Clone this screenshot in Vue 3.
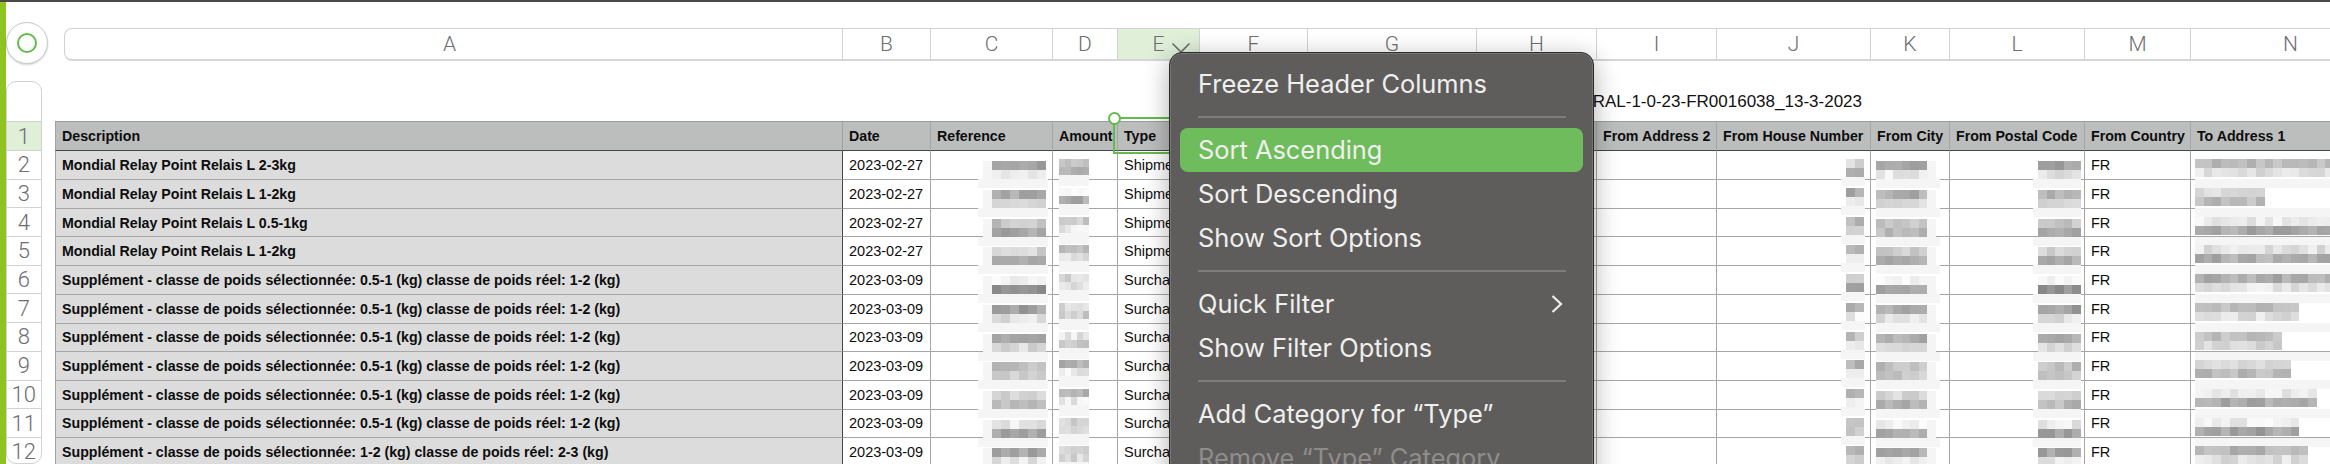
<script setup>
const widths = [788, 88, 122, 65, 82, 108, 169, 120, 120, 154, 79, 135, 106, 200]
const letters = 'ABCDEFGHIJKLMN'.split('')
const headers = ['Description', 'Date', 'Reference', 'Amount', 'Type', '', '', '', 'From Address 2', 'From House Number', 'From City', 'From Postal Code', 'From Country', 'To Address 1']
const barColumns = `778px ${widths.slice(1).map((w) => w + 'px').join(' ')}`
const tableColumns = widths.map((w) => w + 'px').join(' ')

const s1 = 'Supplément - classe de poids sélectionnée: 0.5-1 (kg) classe de poids réel: 1-2 (kg)'
const base = [
  ['Mondial Relay Point Relais L 2-3kg', '2023-02-27', 'Shipment'],
  ['Mondial Relay Point Relais L 1-2kg', '2023-02-27', 'Shipment'],
  ['Mondial Relay Point Relais L 0.5-1kg', '2023-02-27', 'Shipment'],
  ['Mondial Relay Point Relais L 1-2kg', '2023-02-27', 'Shipment'],
  [s1, '2023-03-09', 'Surcharge'],
  [s1, '2023-03-09', 'Surcharge'],
  [s1, '2023-03-09', 'Surcharge'],
  [s1, '2023-03-09', 'Surcharge'],
  [s1, '2023-03-09', 'Surcharge'],
  [s1, '2023-03-09', 'Surcharge'],
  ['Supplément - classe de poids sélectionnée: 1-2 (kg) classe de poids réel: 2-3 (kg)', '2023-03-09', 'Surcharge']
]

const lvC = [[165, 225], [175, 210], [195, 170], [210, 170], [248, 150], [160, 225], [175, 215], [190, 205], [210, 185], [230, 165], [165, 228]]
const lvD = [[205, 185], [245, 175], [200, 230], [190, 225], [215, 225], [215, 205], [230, 195], [180, 235], [180, 235], [210, 220], [215, 215]]
const lvJ = [[215, 185], [175, 235], [185, 225], [190, 225], [205, 170], [180, 235], [190, 235], [175, 225], [180, 230], [205, 195], [190, 195]]
const lvK = [[170, 235], [175, 215], [200, 190], [205, 175], [250, 160], [170, 225], [175, 225], [190, 200], [215, 180], [240, 170], [170, 235]]
const lvN = [[185, 225], [215, 190], [235, 170], [225, 175], [175, 230], [185, 225], [195, 215], [215, 185], [235, 170], [240, 165], [180, 225]]
const nTiles = [16, 8, 16, 16, 16, 12, 10, 11, 14, 12, 13]

const specs = {
  2: { left: 52, tile: 9, n: 7, faint: 0, top: 10, h: 9, bandLeft: 47, bandW: 70, bandTop: 28, bandH: 9, lv: lvC },
  3: { left: 6, tile: 6, n: 5, faint: -1, top: 8, h: 8, bandLeft: 6, bandW: 30, bandTop: 24, bandH: 11, lv: lvD },
  9: { left: 129, tile: 9, n: 2, faint: -1, top: 8, h: 9, bandLeft: 124, bandW: 24, bandTop: 26, bandH: 9, lv: lvJ },
  10: { left: 5, tile: 8.5, n: 7, faint: 6, top: 10, h: 9, bandLeft: 5, bandW: 64, bandTop: 28, bandH: 9, lv: lvK },
  11: { left: 88, tile: 8.6, n: 5, faint: -1, top: 10, h: 9, bandLeft: 83, bandW: 48, bandTop: 28, bandH: 9, lv: lvC },
  13: { left: 4, tile: 8.7, n: 16, faint: -1, top: 8, h: 9, bandLeft: 4, bandW: 200, bandTop: 28, bandH: 9, lv: lvN }
}

let seed = 17
const rnd = () => {
  seed = (seed * 1103 + 12345) % 65536
  return seed / 65536
}

function mosaic(col, r) {
  const spec = specs[col]
  if (!spec) return null
  const n = col === 13 ? nTiles[r] : spec.n
  const tiles = []
  for (const level of spec.lv[r]) {
    for (let i = 0; i < n; i++) {
      const g = i === spec.faint ? 245 : Math.min(252, Math.round(level + (rnd() - 0.5) * 34))
      tiles.push(`rgb(${g},${g},${g})`)
    }
  }
  return {
    tiles,
    tileStyle: { left: spec.left + 'px', top: spec.top + 'px', gridTemplateColumns: `repeat(${n}, ${spec.tile}px)`, gridAutoRows: spec.h + 'px' },
    bandStyle: { left: spec.bandLeft + 'px', top: spec.bandTop + 'px', width: spec.bandW + 'px', height: spec.bandH + 'px' }
  }
}

const rows = base.map(([desc, date, type], r) => {
  const cells = widths.map((_, c) => {
    let text = ''
    if (c === 0) text = desc
    if (c === 1) text = date
    if (c === 4) text = type
    if (c === 12) text = 'FR'
    return { text, mosaic: mosaic(c, r) }
  })
  return cells
})
const rowNumbers = Array.from({ length: 12 }, (_, i) => i + 1)
</script>

<template>
  <div class="app">
    <div class="topbar"></div>
    <div class="body">
      <div class="strip"></div>
      <div class="sheet">
        <div class="head-row">
          <div class="corner"><span class="ring"></span></div>
          <div class="col-bar" :style="{ gridTemplateColumns: barColumns }">
            <div v-for="l in letters" :key="l" class="col-label" :class="{ active: l === 'E' }">
              {{ l }}
              <svg v-if="l === 'E'" class="col-chevron" width="20" height="12" viewBox="0 0 20 12">
                <path d="M1.5 1.5 L10 10 L18.5 1.5" fill="none" stroke="#6b6d6b" stroke-width="1.6" />
              </svg>
            </div>
          </div>
        </div>
        <div class="content">
          <div class="row-nums">
            <div class="row-spacer"></div>
            <div v-for="n in rowNumbers" :key="n" class="row-num" :class="{ active: n === 1 }">{{ n }}</div>
          </div>
          <div class="table-area">
            <div class="title">RAL-1-0-23-FR0016038_13-3-2023</div>
            <div class="table" :style="{ gridTemplateColumns: tableColumns }">
              <div v-for="(h, i) in headers" :key="'h' + i" class="th" :class="{ first: i === 0, a: i === 0 }">{{ h }}</div>
              <template v-for="(row, r) in rows" :key="r">
                <div v-for="(cell, c) in row" :key="c" class="td" :class="{ first: c === 0, a: c === 0 }">
                  {{ cell.text }}
                  <template v-if="cell.mosaic">
                    <span class="band" :style="cell.mosaic.bandStyle"></span>
                    <span class="mosaic" :style="cell.mosaic.tileStyle">
                      <i v-for="(t, k) in cell.mosaic.tiles" :key="k" :style="{ background: t }"></i>
                    </span>
                  </template>
                </div>
              </template>
            </div>
          </div>
        </div>
      </div>
    </div>

    <div class="selection"><span class="handle"></span></div>

    <div class="menu">
      <div class="item">Freeze Header Columns</div>
      <div class="sep"></div>
      <div class="item on">Sort Ascending</div>
      <div class="item">Sort Descending</div>
      <div class="item">Show Sort Options</div>
      <div class="sep"></div>
      <div class="item">
        Quick Filter
        <svg class="arrow" width="12" height="18" viewBox="0 0 12 18">
          <path d="M1.5 1 L10 9 L1.5 17" fill="none" stroke="#efefee" stroke-width="2.2" />
        </svg>
      </div>
      <div class="item">Show Filter Options</div>
      <div class="sep"></div>
      <div class="item">Add Category for “Type”</div>
      <div class="item off">Remove “Type” Category</div>
    </div>
  </div>
</template>

<style scoped>
.app {
  position: relative;
  width: 2330px;
  height: 464px;
  overflow: hidden;
  background: #fff;
  font-family: "Liberation Sans", Arial, sans-serif;
}
.topbar {
  height: 2px;
  background: #4c494a;
}
.body {
  display: flex;
  height: 462px;
}
.strip {
  width: 6px;
  flex: none;
  background: #8fc31f;
}
.sheet {
  flex: none;
  width: 2324px;
}
.head-row {
  display: flex;
  align-items: flex-start;
  height: 62px;
}
.corner {
  width: 42px;
  height: 42px;
  margin-top: 20px;
  margin-right: 16px;
  flex: none;
  box-sizing: border-box;
  border: 1px solid #c9c9c9;
  border-radius: 50%;
  box-shadow: 0 1px 2px rgba(0, 0, 0, 0.18);
  display: flex;
  align-items: center;
  justify-content: center;
  background: #fff;
}
.ring {
  width: 20px;
  height: 20px;
  box-sizing: border-box;
  border: 2px solid #62bb4a;
  border-radius: 50%;
}
.col-bar {
  display: grid;
  height: 33px;
  margin-top: 26px;
  box-sizing: border-box;
  border-top: 1px solid #d2d2d2;
  border-left: 1px solid #d2d2d2;
  border-bottom: 2px solid #d6d6d6;
  border-radius: 8px 0 0 8px;
  overflow: hidden;
}
.col-label {
  position: relative;
  display: flex;
  align-items: center;
  justify-content: center;
  border-right: 1px solid #d2d2d2;
  font-family: Roboto, "Liberation Sans", sans-serif;
  font-weight: 300;
  font-size: 21px;
  color: #6d6d72;
}
.col-label:first-child {
  padding-right: 8px;
}
.col-label.active {
  background: #dfefd8;
}
.col-chevron {
  position: absolute;
  left: 53px;
  top: 13px;
}
.content {
  display: flex;
  align-items: flex-start;
}
.row-nums {
  width: 35.5px;
  height: 383px;
  margin-top: 17px;
  flex: none;
  box-sizing: border-box;
  border: 1px solid #d2d2d2;
  border-radius: 10px;
  overflow: hidden;
  background: #fff;
}
.row-spacer {
  height: 39px;
  border-bottom: 1px solid #d2d2d2;
}
.row-num {
  height: 28.7px;
  box-sizing: border-box;
  display: flex;
  align-items: center;
  justify-content: center;
  border-bottom: 1px solid #d2d2d2;
  font-family: Roboto, "Liberation Sans", sans-serif;
  font-weight: 300;
  font-size: 22px;
  color: #6d6d72;
}
.row-num.active {
  height: 29px;
  background: #dfefd8;
}
.table-area {
  margin-left: 13.5px;
  flex: none;
}
.title {
  height: 31px;
  margin-top: 26px;
  width: 1807px;
  text-align: right;
  font-size: 17px;
  line-height: 24px;
  color: #111;
  white-space: nowrap;
}
.table {
  display: grid;
  grid-template-rows: 29.4px;
  grid-auto-rows: 28.7px;
  border-top: 1px solid #9b9b9b;
}
.th,
.td {
  position: relative;
  display: flex;
  align-items: center;
  box-sizing: border-box;
  padding-left: 6px;
  white-space: nowrap;
  border-right: 1px solid #a6a6a6;
  color: #0d0d0d;
}
.th {
  background: #bcbebd;
  border-bottom: 1.5px solid #454545;
  font-weight: 700;
  font-size: 14.2px;
}
.td {
  border-bottom: 1px solid #a6a6a6;
  font-size: 14.5px;
  background: #fff;
}
.first {
  border-left: 1px solid #a0a0a0;
}
.td.a {
  background: #dcdcdc;
  font-weight: 700;
  font-size: 14.2px;
  border-right-color: #454545;
}
.th.a {
  border-right-color: #a0a0a0;
}
.band {
  position: absolute;
  z-index: 1;
  background: #f5f5f5;
}
.mosaic {
  position: absolute;
  z-index: 2;
  display: grid;
}
.mosaic i {
  display: block;
}
.selection {
  position: absolute;
  left: 1113px;
  top: 117px;
  width: 100px;
  height: 37px;
  box-sizing: border-box;
  border: 2px solid #62bb4a;
  z-index: 3;
}
.handle {
  position: absolute;
  left: -7px;
  top: -7px;
  width: 13px;
  height: 13px;
  box-sizing: border-box;
  border: 2px solid #62bb4a;
  border-radius: 50%;
  background: #fff;
}
.menu {
  position: absolute;
  left: 1169px;
  top: 52px;
  width: 425px;
  height: 440px;
  box-sizing: border-box;
  padding: 9px 10px 0;
  border: 1px solid #2c2c2c;
  border-radius: 13px;
  background: #5f5d5c;
  box-shadow: inset 0 0 0 1px #777574, 0 6px 26px rgba(0, 0, 0, 0.32);
  z-index: 4;
  font-family: Inter, "Liberation Sans", sans-serif;
  font-size: 25.4px;
  color: #efefee;
}
.item {
  position: relative;
  height: 44px;
  box-sizing: border-box;
  padding-bottom: 1px;
  display: flex;
  align-items: center;
  padding-left: 18px;
  border-radius: 8px;
  white-space: nowrap;
}
.item.on {
  background: #6fbc5c;
}
.item.off {
  color: #8f8d8c;
}
.arrow {
  position: absolute;
  right: 20px;
  top: 13px;
}
.sep {
  height: 2px;
  margin: 10px 17px 10px 18px;
  background: #7f7d7c;
}
</style>
